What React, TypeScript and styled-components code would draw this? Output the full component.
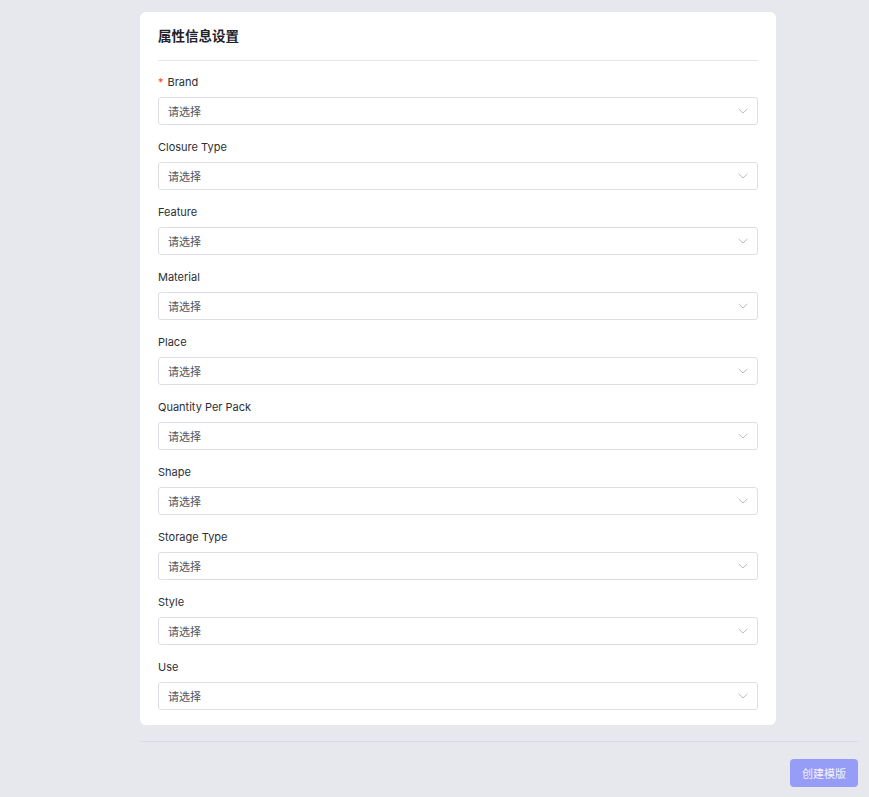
import React from "react";
import styled, { createGlobalStyle } from "styled-components";

const GlobalStyle = createGlobalStyle`
    html, body {
        margin: 0;
        padding: 0;
        background: #e6e8ee;
        font-family: Inter, "Noto Sans CJK SC", sans-serif;
    }
`;

const Page = styled.div`
    min-height: 797px;
    padding: 12px 11px 10px 140px;
    box-sizing: border-box;
`;

const Card = styled.div`
    width: 636px;
    box-sizing: border-box;
    background: #fff;
    border-radius: 6px;
    padding: 0 18px 15px;
`;

const CardHeader = styled.div`
    padding: 14px 0 14px;
    border-bottom: 1px solid #e4e6eb;
`;

const Title = styled.h2`
    margin: 0;
    font-size: 13.5px;
    line-height: 20px;
    font-weight: 600;
    color: #1f2329;
`;

const Fields = styled.div`
    display: flex;
    flex-direction: column;
    gap: 14px;
    padding-top: 13px;
`;

const Field = styled.div`
    display: flex;
    flex-direction: column;
    gap: 7px;
`;

const Label = styled.label`
    font-size: 11px;
    line-height: 16px;
    color: #2b2f36;
`;

const Required = styled.span`
    color: #f04438;
    margin-right: 4px;
`;

const SelectBox = styled.div`
    height: 28px;
    box-sizing: border-box;
    border: 1px solid #dcdfe6;
    border-radius: 3px;
    padding: 0 9px 0 9px;
    display: flex;
    align-items: center;
    justify-content: space-between;
    font-size: 11px;
    color: #4e5561;
`;

const Chevron = styled.svg`
    width: 10px;
    height: 10px;
    color: #b8bcc4;
`;

const Divider = styled.div`
    height: 1px;
    background: #d8dbe2;
    margin-top: 16px;
`;

const Footer = styled.div`
    display: flex;
    justify-content: flex-end;
    padding-top: 17px;
`;

const Button = styled.button`
    height: 28px;
    padding: 0 12px;
    border: none;
    border-radius: 4px;
    background: #959df6;
    color: #f3f4ff;
    font-family: inherit;
    font-size: 11px;
`;

const fields = [
    { name: "Brand", required: true },
    { name: "Closure Type" },
    { name: "Feature" },
    { name: "Material" },
    { name: "Place" },
    { name: "Quantity Per Pack" },
    { name: "Shape" },
    { name: "Storage Type" },
    { name: "Style" },
    { name: "Use" },
];

export default function App() {
    return (
        <>
            <GlobalStyle />
            <Page>
                <Card>
                    <CardHeader>
                        <Title>属性信息设置</Title>
                    </CardHeader>
                    <Fields>
                        {fields.map((f) => (
                            <Field key={f.name}>
                                <Label>
                                    {f.required && <Required>*</Required>}
                                    {f.name}
                                </Label>
                                <SelectBox>
                                    <span>请选择</span>
                                    <Chevron viewBox="0 0 10 10" fill="none">
                                        <path d="M1 3.2 L5 7 L9 3.2" stroke="currentColor" strokeWidth="1" strokeLinecap="round" strokeLinejoin="round" />
                                    </Chevron>
                                </SelectBox>
                            </Field>
                        ))}
                    </Fields>
                </Card>
                <Divider />
                <Footer>
                    <Button>创建模版</Button>
                </Footer>
            </Page>
        </>
    );
}
